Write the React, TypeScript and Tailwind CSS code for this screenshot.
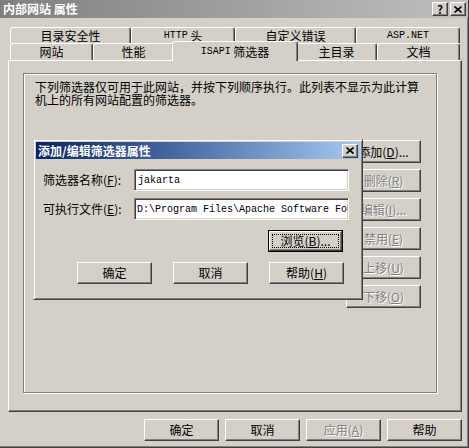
import React from "react";

const raised =
  "border border-t-white border-l-white border-r-[#404040] border-b-[#404040] shadow-[inset_-1px_-1px_0_#808080]";
const sunken =
  "border border-t-[#808080] border-l-[#808080] border-r-white border-b-white shadow-[inset_1px_1px_0_#404040,inset_-1px_-1px_0_#d4d0c8]";
const dim = "text-[#808080] [text-shadow:1px_1px_0_#ffffff]";
const mono = "font-['Liberation_Mono',monospace] text-[10px]";

function Btn({
  children,
  disabled,
  className = "",
}: {
  children: React.ReactNode;
  disabled?: boolean;
  className?: string;
}) {
  return (
    <div
      className={`${raised} bg-[#d4d0c8] flex items-center justify-center w-[75px] h-[22px] leading-none whitespace-nowrap ${
        disabled ? dim : ""
      } ${className}`}
    >
      {children}
    </div>
  );
}

function Tab({
  children,
  w,
  selected,
}: {
  children: React.ReactNode;
  w: string;
  selected?: boolean;
}) {
  if (selected) {
    return (
      <div
        className={`${w} -mx-[2px] -mt-[2px] h-[20px] relative z-10 bg-[#d4d0c8] rounded-t-[3px] border-t border-l border-r border-t-white border-l-white border-r-[#404040] shadow-[inset_-1px_0_0_#808080] flex items-center justify-center leading-none`}
      >
        {children}
      </div>
    );
  }
  return (
    <div
      className={`${w} h-full bg-[#d4d0c8] rounded-t-[3px] border-t border-l border-r border-t-white border-l-white border-r-[#404040] shadow-[inset_-1px_0_0_#808080] flex items-center justify-center leading-none`}
    >
      {children}
    </div>
  );
}

function CloseGlyph() {
  return (
    <svg width="8" height="7" viewBox="0 0 8 7">
      <path d="M0.5 0.5 L7.5 6.5 M7.5 0.5 L0.5 6.5" stroke="#000" strokeWidth="1.6" />
    </svg>
  );
}

function CapBtn({ children }: { children: React.ReactNode }) {
  return (
    <div
      className={`${raised} bg-[#d4d0c8] w-[16px] h-[14px] flex items-center justify-center text-[11px] font-bold leading-none`}
    >
      {children}
    </div>
  );
}

export default function App() {
  return (
    <div className="w-[469px] h-[448px] bg-[#d4d0c8] relative overflow-hidden border-r border-b border-[#404040] shadow-[inset_-1px_-1px_0_#808080] font-['Noto_Sans_CJK_SC',sans-serif] text-[12px] text-black">
      {/* title bar */}
      <div className="h-[18px] flex items-center justify-between bg-linear-to-r from-[#808080] to-[#c0c0c0] pl-[3px] pr-[2px]">
        <span className="text-white font-bold leading-none">内部网站 属性</span>
        <div className="flex gap-[2px]">
          <CapBtn>?</CapBtn>
          <CapBtn>
            <CloseGlyph />
          </CapBtn>
        </div>
      </div>

      <div className="pl-[8px] pt-[9px]">
        {/* back tab row */}
        <div className="flex ml-[2px] h-[16px]">
          <Tab w="w-[121px]">目录安全性</Tab>
          <Tab w="w-[104px]">
            <span className={mono}>HTTP</span>&nbsp;头
          </Tab>
          <Tab w="w-[121px]">自定义错误</Tab>
          <Tab w="w-[104px]">
            <span className={mono}>ASP.NET</span>
          </Tab>
        </div>
        {/* front tab row */}
        <div className="flex ml-[2px] h-[17px] items-start">
          <Tab w="w-[83px]">网站</Tab>
          <Tab w="w-[81px]">性能</Tab>
          <Tab w="w-[126px]" selected>
            <span className={mono}>ISAPI</span>&nbsp;筛选器
          </Tab>
          <Tab w="w-[81px]">主目录</Tab>
          <Tab w="w-[83px]">文档</Tab>
        </div>

        {/* tab page */}
        <div className="w-[454px] h-[352px] border border-t-white border-l-white border-r-[#404040] border-b-[#404040] shadow-[inset_-1px_-1px_0_#808080] pt-[12px] pl-[14px]">
          <div className="w-[414px] h-[320px] border border-[#808080] shadow-[1px_1px_0_#ffffff,inset_1px_1px_0_#ffffff] pl-[9px] pt-[6px]">
            <p className="ml-[2px] leading-[13px]">
              下列筛选器仅可用于此网站，并按下列顺序执行。此列表不显示为此计算
              <br />
              机上的所有网站配置的筛选器。
            </p>
            <div className="flex mt-[34px]">
              {/* filter list, hidden under the modal */}
              <div className={`${sunken} bg-white w-[305px] h-[150px]`} />
              <div className="ml-[8px] flex flex-col gap-[6px]">
                <Btn className="h-[23px]">
                  添加(<u>D</u>)...
                </Btn>
                <Btn disabled className="h-[23px]">
                  删除(<u>R</u>)
                </Btn>
                <Btn disabled className="h-[23px]">
                  编辑(<u>I</u>)...
                </Btn>
                <Btn disabled className="h-[23px]">
                  禁用(<u>E</u>)
                </Btn>
                <Btn disabled className="h-[23px]">
                  上移(<u>U</u>)
                </Btn>
                <Btn disabled className="h-[23px]">
                  下移(<u>O</u>)
                </Btn>
              </div>
            </div>
          </div>
        </div>
      </div>

      {/* dialog buttons */}
      <div className="flex justify-end gap-[6px] pr-[6px] mt-[7px]">
        <Btn>确定</Btn>
        <Btn>取消</Btn>
        <Btn disabled>
          应用(<u>A</u>)
        </Btn>
        <Btn>帮助</Btn>
      </div>

      {/* modal: add / edit filter */}
      <div className="absolute left-[33px] top-[139px] w-[330px] h-[161px] bg-[#d4d0c8] border border-t-[#d4d0c8] border-l-[#d4d0c8] border-r-[#404040] border-b-[#404040] shadow-[inset_1px_1px_0_#ffffff,inset_-1px_-1px_0_#808080] p-[2px]">
        <div className="h-[17px] flex items-center justify-between bg-linear-to-r from-[#0a246a] to-[#a6caf0] pl-[2px] pr-[2px]">
          <span className="text-white font-bold leading-none">添加/编辑筛选器属性</span>
          <CapBtn>
            <CloseGlyph />
          </CapBtn>
        </div>
        <div className="pl-[7px] pt-[10px]">
          <div className="flex items-center h-[22px]">
            <span className="w-[91px] leading-none">
              筛选器名称(<u>F</u>):
            </span>
            <div className={`${sunken} bg-white w-[215px] h-[22px] flex items-center pl-[3px] overflow-hidden`}>
              <span className={`${mono} whitespace-nowrap`}>jakarta</span>
            </div>
          </div>
          <div className="flex items-center h-[22px] mt-[7px]">
            <span className="w-[91px] leading-none">
              可执行文件(<u>E</u>):
            </span>
            <div className={`${sunken} bg-white w-[215px] h-[22px] flex items-center pl-[2px] overflow-hidden`}>
              <span className={`${mono} whitespace-nowrap`}>
                D:\Program Files\Apache Software Foundation\jakarta-tomcat\isapi_redirect.dll
              </span>
            </div>
          </div>
          <div className="flex justify-end w-[300px] mt-[10px]">
            <div className="w-[75px] h-[22px] border border-black">
              <div className={`${raised} bg-[#d4d0c8] w-full h-full p-[2px]`}>
                <div className="w-full h-full border border-dotted border-black flex items-center justify-center leading-none">
                  浏览(<u>B</u>)...
                </div>
              </div>
            </div>
          </div>
          <div className="flex gap-[21px] ml-[34px] mt-[10px]">
            <Btn>确定</Btn>
            <Btn>取消</Btn>
            <Btn>
              帮助(<u>H</u>)
            </Btn>
          </div>
        </div>
      </div>
    </div>
  );
}
